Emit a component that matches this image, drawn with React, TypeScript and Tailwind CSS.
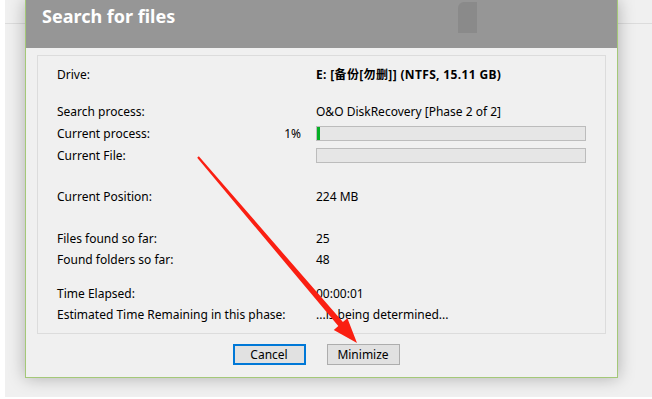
import React from 'react';

const FONT = '"Noto Sans", "Noto Sans CJK SC", sans-serif';

type Row = {
  label: string;
  value?: React.ReactNode;
  pct?: string;
  bar?: number;
  gap: string;
};

const rows: Row[] = [
  {
    label: 'Drive:',
    value: <span className="font-bold tracking-[0.35px]">E: [备份[勿删]] (NTFS, 15.11 GB)</span>,
    gap: 'mt-0',
  },
  { label: 'Search process:', value: 'O&O DiskRecovery [Phase 2 of 2]', gap: 'mt-[16px]' },
  { label: 'Current process:', pct: '1%', bar: 1, gap: 'mt-[1px]' },
  { label: 'Current File:', bar: 0, gap: 'mt-[1px]' },
  { label: 'Current Position:', value: '224 MB', gap: 'mt-[20px]' },
  { label: 'Files found so far:', value: '25', gap: 'mt-[21px]' },
  { label: 'Found folders so far:', value: '48', gap: 'mt-0' },
  { label: 'Time Elapsed:', value: '00:00:01', gap: 'mt-[13px]' },
  { label: 'Estimated Time Remaining in this phase:', value: '...is being determined...', gap: 'mt-0' },
];

function ProgressBar({ value }: { value: number }) {
  return (
    <div className="h-[15px] w-full border border-[#bcbcbc] bg-[#e6e6e6]">
      {value > 0 && <div className="h-full w-[3px] bg-[#06b025]" />}
    </div>
  );
}

function Arrow() {
  return (
    <svg
      className="pointer-events-none absolute left-0 top-0"
      width="652"
      height="399"
      viewBox="0 0 652 399"
    >
      <polygon
        points="197.2,157.7 198.8,156.3 342.9,322.1 347.4,318.2 357,343 333.8,330 338.3,326.1"
        fill="#fa1f12"
      />
    </svg>
  );
}

export default function App() {
  return (
    <div
      className="relative h-[399px] w-[652px] overflow-hidden bg-white text-[12px] text-black"
      style={{ fontFamily: FONT }}
    >
      <div className="ml-[5px] h-[397px] bg-[linear-gradient(to_bottom,#f0f0f0_23px,#dcdcdc_23px,#dcdcdc_24px,#f0f0f0_24px)] pl-[20px]">
        <div className="flex w-[593px] flex-col border-x border-b border-[#a4c878] bg-[#f0f0f0] shadow-[0_0_16px_rgba(0,0,0,0.28)]">
          <div className="relative h-[48px] bg-[#969696] pl-[16px] pt-[3px]">
            <span className="text-[18px] font-bold leading-[26px] text-white">Search for files</span>
            <div className="absolute left-[432px] top-[2px] h-[31px] w-[19px] rounded-tl-[6px] bg-[#8a8a8a]" />
          </div>

          <div className="mx-[11px] mt-[7px] border border-[#dcdcdc] pb-[8px] pl-[19px] pr-[19px] pt-[8px]">
            {rows.map((r) => (
              <div
                key={r.label}
                className={`grid h-[21px] grid-cols-[204px_40px_1fr] items-center leading-[21px] ${r.gap}`}
              >
                <span className="whitespace-nowrap">{r.label}</span>
                <span className="text-right">{r.pct}</span>
                <div className="pl-[15px]">
                  {r.bar !== undefined ? (
                    <ProgressBar value={r.bar} />
                  ) : (
                    <span className="whitespace-nowrap">{r.value}</span>
                  )}
                </div>
              </div>
            ))}
          </div>

          <div className="flex justify-center gap-[21px] pb-[12px] pr-[11px] pt-[10px]">
            <button className="h-[21px] w-[73px] border-2 border-[#0078d7] bg-[#e1e1e1] text-[12px] leading-[17px]">
              Cancel
            </button>
            <button className="h-[21px] w-[73px] border border-[#adadad] bg-[#e1e1e1] text-[12px] leading-[19px]">
              Minimize
            </button>
          </div>
        </div>
      </div>
      <Arrow />
    </div>
  );
}
